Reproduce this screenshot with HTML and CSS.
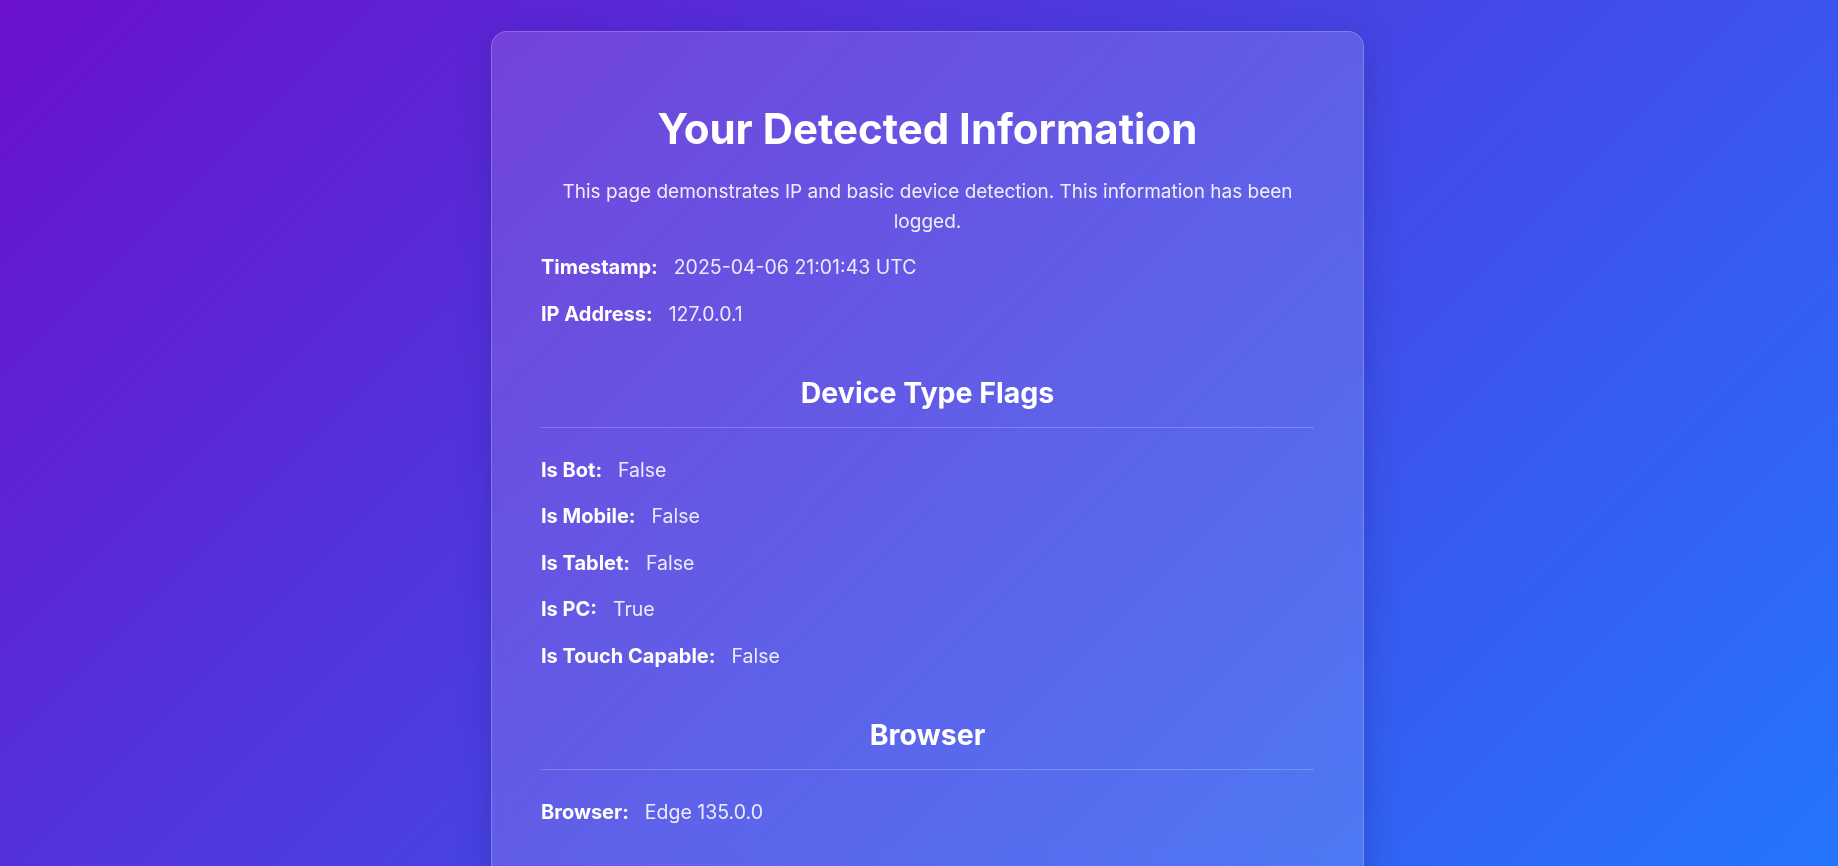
FILE: index.html
```html
<!DOCTYPE html>
<html lang="en">
<head>
<meta charset="utf-8">
<title>Your Detected Information</title>
<link rel="stylesheet" href="styles.css">
</head>
<body>
<main class="page">
  <section class="card">
    <h1 class="title">Your Detected Information</h1>
    <p class="intro">This page demonstrates IP and basic device detection. This information has been logged.</p>

    <div class="row"><span class="label">Timestamp:</span><span class="value">2025-04-06 21:01:43 UTC</span></div>
    <div class="row"><span class="label">IP Address:</span><span class="value">127.0.0.1</span></div>

    <h2 class="section-title">Device Type Flags</h2>
    <div class="rows">
      <div class="row"><span class="label">Is Bot:</span><span class="value">False</span></div>
      <div class="row"><span class="label">Is Mobile:</span><span class="value">False</span></div>
      <div class="row"><span class="label">Is Tablet:</span><span class="value">False</span></div>
      <div class="row"><span class="label">Is PC:</span><span class="value">True</span></div>
      <div class="row"><span class="label">Is Touch Capable:</span><span class="value">False</span></div>
    </div>

    <h2 class="section-title">Browser</h2>
    <div class="rows">
      <div class="row"><span class="label">Browser:</span><span class="value">Edge 135.0.0</span></div>
    </div>
  </section>
</main>
</body>
</html>
```
FILE: styles.css
```css
html, body {
  margin: 0;
  padding: 0;
  height: 100%;
  overflow: hidden;
}

body {
  font-family: "Inter", "Noto Sans", sans-serif;
  color: #ffffff;
  background: linear-gradient(135deg, #6a11cb 0%, #2575fc 100%);
}

.page {
  display: flex;
  justify-content: center;
  align-items: flex-start;
  padding: 31px 0 0 17px;
  height: 100%;
  box-sizing: border-box;
}

.card {
  flex: 0 0 auto;
  width: 873px;
  box-sizing: border-box;
  padding: 50px 49px 60px;
  border-radius: 16px;
  border: 1px solid rgba(255, 255, 255, 0.2);
  background: rgba(255, 255, 255, 0.14);
  backdrop-filter: blur(10px);
  box-shadow: 0 8px 32px 0 rgba(31, 38, 135, 0.37);
}

.title {
  margin: 22px 0 22.2px;
  font-size: 42px;
  line-height: 50.4px;
  font-weight: 700;
  text-align: center;
}

.intro {
  margin: 0 0 7.4px;
  font-size: 19px;
  line-height: 30px;
  text-align: center;
  color: rgba(255, 255, 255, 0.9);
}

.section-title {
  margin: 38.5px 0 18px;
  padding-bottom: 17px;
  border-bottom: 1px solid rgba(255, 255, 255, 0.2);
  font-size: 28.5px;
  line-height: 35px;
  font-weight: 700;
  text-align: center;
}

.rows {
  margin-top: 0;
}

.row {
  display: flex;
  align-items: baseline;
  gap: 16px;
  height: 46.5px;
  box-sizing: border-box;
  padding: 8.5px 0 8px;
  line-height: 30px;
}

.label {
  font-size: 20px;
  font-weight: 700;
  color: #ffffff;
}

.value {
  font-size: 19.5px;
  font-weight: 400;
  color: rgba(255, 255, 255, 0.88);
}
```
